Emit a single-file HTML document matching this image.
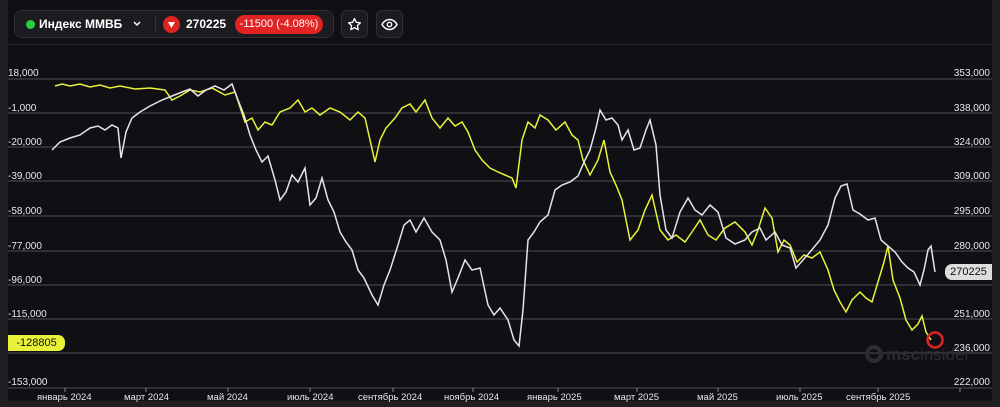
<!DOCTYPE html>
<html><head><meta charset="utf-8"><style>
*{margin:0;padding:0;box-sizing:border-box}
body{width:1000px;height:407px;background:#1f1f23;font-family:"Liberation Sans",sans-serif;overflow:hidden;position:relative}
.panel{position:absolute;left:8px;top:0;width:984px;height:401px;background:#0f0f14}
.hdr{position:absolute;left:14px;top:10px;width:320px;height:28px;background:#1c1c20;border:1px solid #2e2e33;border-radius:8px}
.btn{position:absolute;top:10px;width:27px;height:28px;background:#1c1c20;border:1px solid #2e2e33;border-radius:6px}
.t{position:absolute;color:#fff;font-size:12px;font-weight:bold}
.lab{position:absolute;color:#e8e8e8;font-size:10px}
.sep{position:absolute;left:8px;top:44px;width:984px;height:1px;background:#232328}
</style></head><body>
<div class="panel"></div>
<div class="sep"></div>
<div class="hdr"></div>
<div style="position:absolute;left:26px;top:20px;width:9px;height:9px;border-radius:50%;background:#2ecc40"></div>
<div class="t" style="left:39px;top:17px">Индекс ММВБ</div>
<svg style="position:absolute;left:132px;top:20px" width="10" height="8"><path d="M2 2l3 3 3-3" stroke="#fff" stroke-width="1.5" fill="none"/></svg>
<div style="position:absolute;left:155px;top:16px;width:1px;height:16px;background:#333"></div>
<div style="position:absolute;left:163px;top:16px;width:17px;height:17px;border-radius:50%;background:#e02424"></div>
<svg style="position:absolute;left:163px;top:16px" width="17" height="17"><path d="M5 6h7l-3.5 6z" fill="#fff"/></svg>
<div class="t" style="left:186px;top:17px">270225</div>
<div style="position:absolute;left:235px;top:15px;width:88px;height:19px;border-radius:10px;background:#e02424;color:#fff;font-size:11px;line-height:19px;text-align:center">-11500 (-4.08%)</div>
<div class="btn" style="left:341px"></div>
<svg style="position:absolute;left:347px;top:17px" width="15" height="15" viewBox="0 0 15 15"><path d="M7.5 1.5l1.8 3.8 4.1.5-3 2.8.8 4.1-3.7-2-3.7 2 .8-4.1-3-2.8 4.1-.5z" stroke="#fff" stroke-width="1.3" fill="none" stroke-linejoin="round"/></svg>
<div class="btn" style="left:376px"></div>
<svg style="position:absolute;left:381px;top:18px" width="17" height="13" viewBox="0 0 17 13"><path d="M1 6.5C3 3 5.5 1.5 8.5 1.5S14 3 16 6.5C14 10 11.5 11.5 8.5 11.5S3 10 1 6.5z" stroke="#fff" stroke-width="1.4" fill="none"/><circle cx="8.5" cy="6.5" r="2.2" stroke="#fff" stroke-width="1.4" fill="none"/></svg>

<svg style="position:absolute;left:0;top:0" width="1000" height="407">
<g stroke="#3a3a40" stroke-width="1.5">
<line x1="8" y1="79" x2="992" y2="79"/><line x1="8" y1="113" x2="992" y2="113"/><line x1="8" y1="147" x2="992" y2="147"/><line x1="8" y1="181" x2="992" y2="181"/><line x1="8" y1="216" x2="992" y2="216"/><line x1="8" y1="251" x2="992" y2="251"/><line x1="8" y1="285" x2="992" y2="285"/><line x1="8" y1="319" x2="992" y2="319"/><line x1="8" y1="353" x2="992" y2="353"/><line x1="8" y1="388" x2="992" y2="388"/>
</g>
<g stroke="#888" stroke-width="1"><line x1="65" y1="388" x2="65" y2="392"/><line x1="146" y1="388" x2="146" y2="392"/><line x1="228" y1="388" x2="228" y2="392"/><line x1="310" y1="388" x2="310" y2="392"/><line x1="393" y1="388" x2="393" y2="392"/><line x1="473" y1="388" x2="473" y2="392"/><line x1="558" y1="388" x2="558" y2="392"/><line x1="637" y1="388" x2="637" y2="392"/><line x1="718" y1="388" x2="718" y2="392"/><line x1="800" y1="388" x2="800" y2="392"/><line x1="878" y1="388" x2="878" y2="392"/><line x1="960" y1="388" x2="960" y2="392"/></g>
<circle cx="874" cy="354" r="7" fill="none" stroke="#2c2c32" stroke-width="4"/>
<text x="886" y="360" font-family="Liberation Sans" font-size="17" font-weight="bold" fill="#2c2c32">msc</text><text x="920" y="360" font-family="Liberation Sans" font-size="17" fill="#2c2c32">insider</text>
<polyline fill="none" stroke="#e9f23a" stroke-width="1.5" points="55,86 62,84 70,86 80,84 90,87 100,85 110,88 120,86 135,89 150,88 165,90 172,100 180,96 190,90 200,92 212,88 225,95 235,92 245,122 252,118 258,130 265,122 272,125 280,112 290,108 298,100 305,112 312,108 320,115 330,108 340,112 350,120 358,112 365,118 370,140 375,162 380,140 386,128 395,118 402,108 410,104 416,112 425,100 432,118 440,128 448,118 455,126 462,122 468,132 475,150 482,160 490,168 498,172 505,175 512,178 516,188 522,140 528,122 535,128 540,115 548,120 556,130 565,122 572,135 578,140 583,160 590,175 598,160 604,140 610,172 616,185 622,200 630,240 638,230 645,210 652,195 660,230 668,240 676,235 685,242 692,232 700,220 708,235 716,240 725,228 735,222 745,232 752,245 758,230 765,208 772,218 778,252 784,240 790,245 797,262 804,255 812,258 820,252 828,270 834,290 840,302 846,312 852,300 860,292 866,298 872,302 878,282 884,262 888,246 893,280 900,298 906,320 912,330 918,324 922,316 926,332 931,340"/>
<polyline fill="none" stroke="#e4e4ea" stroke-width="1.5" points="52,150 60,142 70,138 80,135 90,128 98,126 105,130 112,125 118,128 121,158 126,132 132,118 140,112 150,106 162,100 172,96 182,92 190,89 198,96 206,90 215,86 224,90 232,84 238,100 244,115 250,135 256,150 262,162 268,156 275,180 280,200 286,192 292,175 298,182 305,168 310,205 316,198 322,178 328,200 334,212 340,232 346,242 352,250 358,270 364,278 372,295 378,305 384,285 390,270 398,245 404,225 410,220 416,232 424,218 432,232 440,240 446,260 452,292 458,278 465,260 472,270 480,268 488,305 494,315 500,308 508,320 514,340 519,346 523,310 528,240 534,232 540,222 548,215 555,190 562,185 570,182 578,176 585,160 590,150 596,128 600,110 606,120 612,118 618,125 622,140 628,130 634,150 640,148 646,130 650,120 656,145 660,195 666,230 672,238 680,212 688,198 695,210 702,215 710,205 718,212 726,238 735,244 745,240 752,232 760,228 766,240 775,232 782,245 790,248 796,268 803,260 810,252 820,240 828,225 835,198 841,186 847,184 853,210 860,214 868,220 875,218 881,240 888,246 895,252 902,262 908,268 914,272 920,285 924,270 928,250 931,246 935,272"/>
<circle cx="935" cy="340" r="7.5" fill="none" stroke="#e02424" stroke-width="2.5"/>
</svg>
<div class="lab" style="left:8px;top:68px">18,000</div>
<div class="lab" style="left:8px;top:103px">-1,000</div>
<div class="lab" style="left:8px;top:137px">-20,000</div>
<div class="lab" style="left:8px;top:171px">-39,000</div>
<div class="lab" style="left:8px;top:206px">-58,000</div>
<div class="lab" style="left:8px;top:241px">-77,000</div>
<div class="lab" style="left:8px;top:275px">-96,000</div>
<div class="lab" style="left:8px;top:309px">-115,000</div>
<div class="lab" style="left:8px;top:377px">-153,000</div>
<div style="position:absolute;left:8px;top:335px;width:57px;height:16px;border-radius:0 7px 7px 0;background:#e9f23a;color:#111;font-size:11px;line-height:16px;text-align:center">-128805</div>
<div class="lab" style="right:10px;top:68px">353,000</div>
<div class="lab" style="right:10px;top:103px">338,000</div>
<div class="lab" style="right:10px;top:137px">324,000</div>
<div class="lab" style="right:10px;top:171px">309,000</div>
<div class="lab" style="right:10px;top:206px">295,000</div>
<div class="lab" style="right:10px;top:241px">280,000</div>
<div class="lab" style="right:10px;top:309px">251,000</div>
<div class="lab" style="right:10px;top:343px">236,000</div>
<div class="lab" style="right:10px;top:377px">222,000</div>
<div style="position:absolute;left:945px;top:264px;width:47px;height:16px;border-radius:7px 0 0 7px;background:#ddd;color:#111;font-size:11px;line-height:16px;text-align:center">270225</div>
<div class="lab" style="left:37px;top:392px;font-size:9.5px">январь 2024</div>
<div class="lab" style="left:124px;top:392px;font-size:9.5px">март 2024</div>
<div class="lab" style="left:207px;top:392px;font-size:9.5px">май 2024</div>
<div class="lab" style="left:287px;top:392px;font-size:9.5px">июль 2024</div>
<div class="lab" style="left:358px;top:392px;font-size:9.5px">сентябрь 2024</div>
<div class="lab" style="left:444px;top:392px;font-size:9.5px">ноябрь 2024</div>
<div class="lab" style="left:527px;top:392px;font-size:9.5px">январь 2025</div>
<div class="lab" style="left:614px;top:392px;font-size:9.5px">март 2025</div>
<div class="lab" style="left:697px;top:392px;font-size:9.5px">май 2025</div>
<div class="lab" style="left:776px;top:392px;font-size:9.5px">июль 2025</div>
<div class="lab" style="left:846px;top:392px;font-size:9.5px">сентябрь 2025</div>
</body></html>
